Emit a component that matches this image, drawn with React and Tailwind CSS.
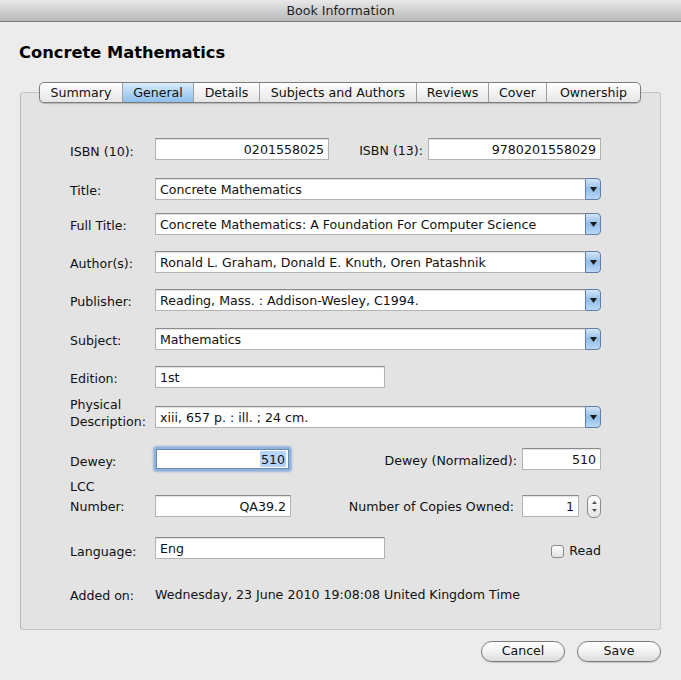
import React from 'react';

const tabs = [
  { name: 'Summary', w: 'w-[82px]' },
  { name: 'General', w: 'w-[71px]', active: true },
  { name: 'Details', w: 'w-[66px]' },
  { name: 'Subjects and Authors', w: 'w-[157px]' },
  { name: 'Reviews', w: 'w-[72px]' },
  { name: 'Cover', w: 'w-[58px]' },
  { name: 'Ownership', w: 'w-[94px]' },
];

const TextField = ({ value, className = '', right }) => (
  <div
    className={`h-[22px] bg-white border border-[#b3b3b3] border-t-[#8c8c8c] shadow-[inset_0_1px_1px_rgba(0,0,0,0.12)] flex items-center px-[4px] ${right ? 'justify-end' : ''} ${className}`}
  >
    <span className="leading-none pt-[2px]">{value}</span>
  </div>
);

const ComboField = ({ value }) => (
  <div className="flex-1 h-[22px] flex">
    <div className="flex-1 bg-white border border-[#b3b3b3] border-t-[#8c8c8c] border-r-0 shadow-[inset_0_1px_1px_rgba(0,0,0,0.12)] flex items-center px-[4px]">
      <span className="leading-none pt-[2px]">{value}</span>
    </div>
    <div className="w-[16px] rounded-r-[4px] border border-[#5f7fa8] bg-gradient-to-b from-[#d4e6f8] via-[#92bde9] to-[#b9d9f7] flex items-center justify-center">
      <svg width="7" height="5" viewBox="0 0 7 5">
        <path d="M0 0 H7 L3.5 5 Z" fill="#1a1a1a" />
      </svg>
    </div>
  </div>
);

const Label = ({ children, className = '' }) => (
  <div className={`w-[85px] shrink-0 leading-[17px] ${className}`}>{children}</div>
);

export default function App() {
  return (
    <div
      className="w-[681px] h-[680px] bg-[#ececec] flex flex-col text-[12.6px] text-[#111]"
      style={{ fontFamily: '"DejaVu Sans", "Noto Sans", sans-serif' }}
    >
      <div className="h-[22px] shrink-0 bg-gradient-to-b from-[#e9e9e9] to-[#b9b9b9] border-b border-[#7a7a7a] flex items-center justify-center pt-[2px] text-[12.6px] text-[#222]">
        Book Information
      </div>

      <h1 className="pl-[19px] mt-[20px] text-[16.3px] font-bold leading-[22px] text-black">
        Concrete Mathematics
      </h1>

      <div className="mx-[20px] mt-[18px] flex flex-col">
        <div className="flex justify-center relative z-10 pr-[1px]">
          <div className="flex h-[21px] rounded-[5px] border border-[#7d7d7d] bg-gradient-to-b from-white to-[#e6e6e6] shadow-[0_1px_1px_rgba(0,0,0,0.2)] overflow-hidden">
            {tabs.map((t, i) => (
              <div
                key={t.name}
                className={`${t.w} flex items-center justify-center pt-[1px] ${i > 0 ? 'border-l border-[#a0a0a0]' : ''} ${
                  t.active ? 'bg-gradient-to-b from-[#d9ecfb] via-[#b0d4f4] to-[#8fc0ec]' : ''
                }`}
              >
                {t.name}
              </div>
            ))}
          </div>
        </div>

        <div className="-mt-[11px] h-[538px] bg-[#e3e3e3] border border-[#c6c6c6] border-l-[#b8b8b8] rounded-[3px] pl-[49px] pr-[59px] pt-[45px]">
          {/* ISBN */}
          <div className="flex items-center h-[22px]">
            <Label className="pt-[4px]">ISBN (10):</Label>
            <TextField value="0201558025" right className="w-[174px]" />
            <div className="flex-1 text-right pr-[5px] pt-[4px]">ISBN (13):</div>
            <TextField value="9780201558029" right className="w-[173px]" />
          </div>

          {[
            ['Title:', 'Concrete Mathematics', 'mt-[18px]'],
            ['Full Title:', 'Concrete Mathematics: A Foundation For Computer Science', 'mt-[13px]'],
            ['Author(s):', 'Ronald L. Graham, Donald E. Knuth, Oren Patashnik', 'mt-[16px]'],
            ['Publisher:', 'Reading, Mass. : Addison-Wesley, C1994.', 'mt-[16px]'],
            ['Subject:', 'Mathematics', 'mt-[17px]'],
          ].map(([l, v, m]) => (
            <div key={l} className={`flex items-center h-[22px] ${m}`}>
              <Label className="pt-[3px]">{l}</Label>
              <ComboField value={v} />
            </div>
          ))}

          {/* Edition */}
          <div className="flex items-center h-[22px] mt-[16px]">
            <Label className="pt-[3px]">Edition:</Label>
            <TextField value="1st" className="w-[230px]" />
          </div>

          {/* Physical */}
          <div className="flex items-end h-[22px] mt-[18px]">
            <Label className="-mb-[2px]">
              Physical
              <br />
              Description:
            </Label>
            <ComboField value="xiii, 657 p. : ill. ; 24 cm." />
          </div>

          {/* Dewey */}
          <div className="flex items-center h-[22px] mt-[20px]">
            <Label className="pt-[4px]">Dewey:</Label>
            <div className="w-[137px] h-[24px] rounded-[3px] p-[2px] bg-[#8fb3dc] shadow-[0_0_2px_1px_rgba(110,150,210,0.6)] -ml-[1px]">
              <div className="h-full bg-white border border-[#6c8ab0] flex items-center justify-end px-[2px]">
                <span className="bg-[#b5d5ff] leading-[15px] px-[1px] pt-[1px]">510</span>
              </div>
            </div>
            <div className="flex-1 text-right pr-[5px] pt-[4px]">Dewey (Normalized):</div>
            <TextField value="510" right className="w-[79px]" />
          </div>

          {/* LCC */}
          <div className="flex items-end h-[22px] mt-[25px]">
            <Label className="leading-[20px]">
              LCC
              <br />
              Number:
            </Label>
            <TextField value="QA39.2" right className="w-[136px]" />
            <div className="flex-1 text-right pr-[8px] self-center pt-[3px]">Number of Copies Owned:</div>
            <div className="flex items-center self-center">
              <TextField value="1" right className="w-[57px]" />
              <div className="ml-[8px] w-[14px] h-[23px] rounded-[6px] border border-[#8a8a8a] bg-gradient-to-b from-white to-[#e4e4e4] flex flex-col items-center justify-center gap-[5px]">
                <svg width="5" height="3" viewBox="0 0 5 3">
                  <path d="M0 3 L2.5 0 L5 3 Z" fill="#555" />
                </svg>
                <svg width="5" height="3" viewBox="0 0 5 3">
                  <path d="M0 0 H5 L2.5 3 Z" fill="#555" />
                </svg>
              </div>
            </div>
          </div>

          {/* Language */}
          <div className="flex items-center h-[22px] mt-[20px]">
            <Label className="pt-[6px]">Language:</Label>
            <TextField value="Eng" className="w-[230px]" />
            <div className="flex-1 flex items-center justify-end pt-[6px]">
              <div className="w-[13px] h-[13px] rounded-[3px] border border-[#8a8a8a] bg-gradient-to-b from-white to-[#e2e2e2] mr-[5px]" />
              <span>Read</span>
            </div>
          </div>

          {/* Added on */}
          <div className="flex items-center mt-[27px]">
            <Label>Added on:</Label>
            <span>Wednesday, 23 June 2010 19:08:08 United Kingdom Time</span>
          </div>
        </div>
      </div>

      <div className="flex justify-end gap-[12px] pr-[20px] mt-[11px]">
        {['Cancel', 'Save'].map((b) => (
          <div
            key={b}
            className="w-[84px] h-[21px] rounded-full border border-[#7a7a7a] bg-gradient-to-b from-white via-[#f2f2f2] to-[#dcdcdc] shadow-[0_1px_1px_rgba(0,0,0,0.15)] flex items-center justify-center"
          >
            {b}
          </div>
        ))}
      </div>
    </div>
  );
}
